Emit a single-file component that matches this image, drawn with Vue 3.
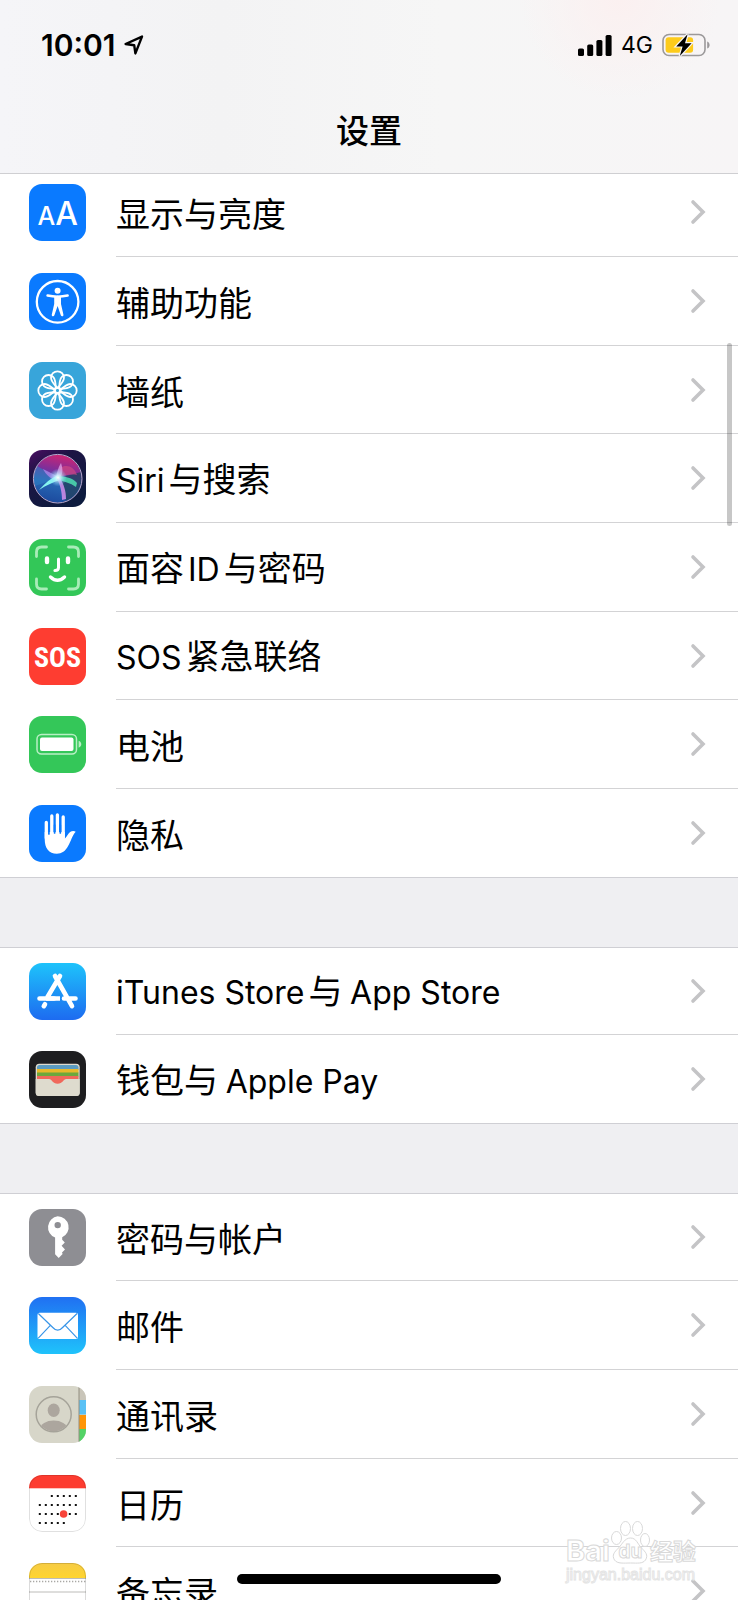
<script setup>
const groups = [
  [
    { icon: 'display', text: '显示与亮度' },
    { icon: 'access', text: '辅助功能' },
    { icon: 'wallpaper', text: '墙纸' },
    { icon: 'siri', text: 'Siri与搜索' },
    { icon: 'face', text: '面容ID与密码' },
    { icon: 'sos', text: 'SOS紧急联络' },
    { icon: 'battery', text: '电池' },
    { icon: 'privacy', text: '隐私' },
  ],
  [
    { icon: 'store', text: 'iTunes Store与 App Store' },
    { icon: 'wallet', text: '钱包与 Apple Pay' },
  ],
  [
    { icon: 'key', text: '密码与帐户' },
    { icon: 'mail', text: '邮件' },
    { icon: 'contacts', text: '通讯录' },
    { icon: 'calendar', text: '日历' },
    { icon: 'notes', text: '备忘录' },
  ],
]

// Latin runs are set in their own face; one that touches Chinese text gets a small lead-in.
const runs = (text) => {
  const parts = text.split(/([A-Za-z][A-Za-z ]*)/).filter(Boolean)
  return parts.map((t, i) => {
    const latin = /^[A-Za-z]/.test(t)
    return { t, latin, lead: latin && i > 0 && !parts[i - 1].endsWith(' ') }
  })
}

const angles = [0, 45, 90, 135, 180, 225, 270, 315]

const dots = []
const weeks = [[2, 6], [0, 6], [0, 6], [0, 4]]
weeks.forEach(([from, to], row) => {
  for (let c = from; c <= to; c++) dots.push({ x: 9.8 + c * 6, y: 20 + row * 9 })
})
</script>

<template>
  <div class="screen">
    <header class="top">
      <div class="status">
        <div class="clock">
          <span>10:01</span>
          <svg width="20" height="20" viewBox="0 0 20 20" aria-hidden="true">
            <path d="M1.6 9 18 1.6 11.4 18.4 10.2 10.2Z" fill="none" stroke="#000" stroke-width="2.4" stroke-linejoin="round" />
          </svg>
        </div>
        <div class="signals">
          <svg width="34" height="21" viewBox="0 0 34 21" aria-hidden="true">
            <rect x="0" y="13.5" width="6" height="7.5" rx="1.6" />
            <rect x="9.2" y="9.5" width="6" height="11.5" rx="1.6" />
            <rect x="18.4" y="5" width="6" height="16" rx="1.6" />
            <rect x="27.6" y="0" width="6" height="21" rx="1.6" />
          </svg>
          <span class="net">4G</span>
          <svg width="48" height="24" viewBox="0 0 48 24" aria-hidden="true">
            <rect x="1" y="1.5" width="42" height="21" rx="6" fill="none" stroke="#9b999a" stroke-width="1.6" />
            <rect x="3.6" y="4.2" width="27.5" height="15.6" rx="3" fill="#fdcb1b" />
            <path d="M45.2 8.5c3.2 1 3.2 6 0 7z" fill="#9b999a" />
            <path d="M25.6 1.2 14.2 13.4h6.4L17.8 23 29.6 10.3h-6.6z" fill="#000" stroke="#f8f5f5" stroke-width="2.4" paint-order="stroke" />
          </svg>
        </div>
      </div>
      <h1 class="title">设置</h1>
    </header>

    <main class="list">
      <ul v-for="(group, g) in groups" :key="g" class="group">
        <li v-for="item in group" :key="item.icon" class="item">
          <a class="row" href="#">
            <svg class="icon" viewBox="0 0 57 57" aria-hidden="true">
              <defs>
                <clipPath :id="'clip-' + item.icon"><rect width="57" height="57" rx="13" /></clipPath>
              </defs>
              <g :clip-path="`url(#clip-${item.icon})`">
                <template v-if="item.icon === 'display'">
                  <rect width="57" height="57" fill="#0a7aff" />
                  <text class="glyph" x="17.4" y="40.5" font-size="25">A</text>
                  <text class="glyph" x="37.6" y="40.5" font-size="32">A</text>
                </template>

                <template v-else-if="item.icon === 'access'">
                  <rect width="57" height="57" fill="#0a7aff" />
                  <circle cx="28.6" cy="28.8" r="20.8" fill="none" stroke="#fff" stroke-width="2.3" />
                  <circle cx="28.6" cy="17.7" r="3" fill="#fff" />
                  <path d="M18.6 22.6c6 1.3 14 1.3 20 0M28.6 23.5v8" fill="none" stroke="#fff" stroke-width="2.6" stroke-linecap="round" />
                  <path d="M25.2 23h6.8v8l2.4 10.5c.4 2-2 2.6-2.6.8L28.6 33l-3.2 9.3c-.6 1.8-3 1.2-2.6-.8L25.2 31z" fill="#fff" />
                </template>

                <template v-else-if="item.icon === 'wallpaper'">
                  <rect width="57" height="57" fill="#38a5da" />
                  <g fill="none" stroke="#fff" stroke-width="1.8" stroke-linejoin="round">
                    <path v-for="a in angles" :key="a" d="M28.5 26C25 22.500 22 19 22 15.800a6.500 6.500 0 0 1 13 0C35 19 32 22.500 28.500 26z" :transform="`rotate(${a} 28.5 28.5)`" />
                    <circle cx="28.5" cy="28.5" r="2.7" />
                  </g>
                </template>

                <template v-else-if="item.icon === 'siri'">
                  <defs>
                    <linearGradient id="siri-bg" x1="0" y1="0" x2=".6" y2="1">
                      <stop offset="0" stop-color="#4b0d63" /><stop offset=".35" stop-color="#1d1444" /><stop offset="1" stop-color="#0d1b3e" />
                    </linearGradient>
                    <linearGradient id="siri-orb" x1=".6" y1="0" x2=".4" y2="1">
                      <stop offset="0" stop-color="#cf2472" /><stop offset=".35" stop-color="#7a2f9c" /><stop offset=".6" stop-color="#2767b4" /><stop offset="1" stop-color="#1c4a9e" />
                    </linearGradient>
                    <radialGradient id="siri-glow">
                      <stop offset="0" stop-color="#fff" /><stop offset=".35" stop-color="#c9f3ff" stop-opacity=".75" /><stop offset="1" stop-color="#7fd0ff" stop-opacity="0" />
                    </radialGradient>
                  </defs>
                  <rect width="57" height="57" fill="url(#siri-bg)" />
                  <circle cx="28.7" cy="28.7" r="24" fill="url(#siri-orb)" />
                  <path d="M29 28 52 22a25 25 0 0 1-15 29z" fill="#22405f" opacity=".8" />
                  <path d="M29 28 8 16a25 25 0 0 0-2 20z" fill="#2f7fc4" opacity=".6" />
                  <path d="M31 18c6-4 14-2 17 7-6-1-12 0-18 2z" fill="#d64a80" opacity=".65" />
                  <path d="M27 28c1-6 2-10 5-15 2 6 2 10-1 15z" fill="#e3a4e8" opacity=".75" />
                  <path d="M28 26 14 19c3 6 7 9 12 11z" fill="#a67fe4" opacity=".85" />
                  <path d="M29 25c-7 3-13 8-19 15 8-5 14-8 21-10z" fill="#86f4ef" />
                  <path d="M28 26c8 0 16 2 20 7l-1 4c-6-4-12-6-19-7z" fill="#4bd6ae" opacity=".9" />
                  <path d="M28 28c3 7 5 13 5 22l4-1c0-8-2-14-6-21z" fill="#c98be8" opacity=".9" />
                  <circle cx="29" cy="27.5" r="9" fill="url(#siri-glow)" />
                  <circle cx="28.7" cy="28.7" r="24.3" fill="none" stroke="#b8a9cf" stroke-width="1" />
                </template>

                <template v-else-if="item.icon === 'face'">
                  <rect width="57" height="57" fill="#33c758" />
                  <g fill="none" stroke-linecap="round" stroke-linejoin="round" stroke="#fff">
                    <path d="M7.5 17.5V13q0-5 5-5h5M39.5 8h5q5 0 5 5v4.5M49.5 40v5q0 5-5 5h-5M17.5 50h-5q-5 0-5-5v-5" stroke="#a9ecb8" stroke-width="2.8" />
                    <path d="M18 19.5v3.6M39 19.5v3.6" stroke-width="4.4" />
                    <path d="M29.5 20v8.5q0 3-3.6 3" stroke-width="3" />
                    <path d="M21.5 38q7 6.6 14 0" stroke-width="3.4" />
                  </g>
                </template>

                <template v-else-if="item.icon === 'sos'">
                  <rect width="57" height="57" fill="#fe3d31" />
                  <text class="sos" x="28.5" y="39">SOS</text>
                </template>

                <template v-else-if="item.icon === 'battery'">
                  <rect width="57" height="57" fill="#34c759" />
                  <rect x="8" y="18.5" width="39.5" height="19.5" rx="4.5" fill="none" stroke="#b9efc5" stroke-width="1.5" />
                  <rect x="11" y="21.5" width="33.5" height="13.5" rx="2" fill="#fff" />
                  <path d="M49.6 24.8c3.6 1.2 3.6 5.7 0 6.9z" fill="#b9efc5" />
                </template>

                <template v-else-if="item.icon === 'privacy'">
                  <rect width="57" height="57" fill="#0a7aff" />
                  <path d="M17.3 17.5V33M22.8 11v20M28.4 10v20M34.2 12v20" stroke="#fff" stroke-width="3.3" stroke-linecap="round" />
                  <path d="M15.7 27h20.2v6.5c2-1.5 3-5 5.2-6.5 1.6-1.2 4-1.6 5.6-.3-3.7 4-4.6 9.3-7.6 14.3-2.6 5-6.3 7.7-11.3 7.7-8 0-12.1-5.5-12.1-14.7z" fill="#fff" />
                  <path d="M19.9 20v9M25.6 20v8M31.3 20v8" stroke="#0a7aff" stroke-width="1.7" stroke-linecap="round" />
                </template>

                <template v-else-if="item.icon === 'store'">
                  <defs><linearGradient id="store-bg" x2="0" y2="1"><stop offset="0" stop-color="#1ec3fb" /><stop offset="1" stop-color="#1d6bf0" /></linearGradient></defs>
                  <rect width="57" height="57" fill="url(#store-bg)" />
                  <path d="M31 13 18.5 34M26 13 43 43.2M10.5 35.5H25M35 35.5h11.5M16 41.2l-1.2 2" fill="none" stroke="#fff" stroke-width="4.6" stroke-linecap="round" />
                  <path d="M17 35.5h14" stroke="#fff" stroke-width="4.6" />
                </template>

                <template v-else-if="item.icon === 'wallet'">
                  <defs><clipPath id="wallet-card"><rect x="8" y="14" width="41.5" height="30" rx="2.5" /></clipPath></defs>
                  <rect width="57" height="57" fill="#1e1e20" />
                  <rect x="6.7" y="12.7" width="44" height="32.3" rx="3.5" fill="#dedbce" />
                  <g clip-path="url(#wallet-card)">
                    <rect x="8" y="14" width="42" height="5" fill="#5c9cc0" />
                    <rect x="8" y="18" width="42" height="4" fill="#e8b92b" />
                    <rect x="8" y="21.5" width="42" height="4" fill="#6ca83c" />
                    <rect x="8" y="25" width="42" height="10" fill="#f0685b" />
                  </g>
                  <path d="M6.7 28H20c3 0 3.5 4.8 8.6 4.8S34.3 28 37.3 28h13.4v13.5a3.5 3.5 0 0 1-3.5 3.5h-37a3.5 3.5 0 0 1-3.5-3.5z" fill="#dedbce" />
                </template>

                <template v-else-if="item.icon === 'key'">
                  <rect width="57" height="57" fill="#8e8e93" />
                  <path fill-rule="evenodd" d="M28.7 7.3a11 11 0 0 1 4.5 21v2.4l2.6 2.8-3.2 3.3 3.4 3.6-3 3.2.6 1.5-3.9 4-3.6-3.9V28.5a11 11 0 0 1 2.6-21.2zm0 5.6a3.2 3.2 0 1 0 0 6.4 3.2 3.2 0 0 0 0-6.4z" fill="#fff" />
                </template>

                <template v-else-if="item.icon === 'mail'">
                  <defs><linearGradient id="mail-bg" x2="0" y2="1"><stop offset="0" stop-color="#2070f2" /><stop offset="1" stop-color="#1fc3fb" /></linearGradient></defs>
                  <rect width="57" height="57" fill="url(#mail-bg)" />
                  <rect x="8.5" y="15.7" width="40.5" height="26.3" rx="2" fill="#fff" />
                  <path d="m9.3 16.5 14.5 14q4.9 5.4 9.8 0l14.5-14M9.3 41.2l11.8-12.6M48.2 41.2 36.4 28.6" fill="none" stroke="#3a96e8" stroke-width="1.2" />
                </template>

                <template v-else-if="item.icon === 'contacts'">
                  <defs><clipPath id="person"><circle cx="24.7" cy="28.3" r="17" /></clipPath></defs>
                  <rect width="57" height="57" fill="#d7d6c9" />
                  <rect x="50" width="7" height="14" fill="#c9c5b9" />
                  <rect x="50" y="14" width="7" height="14.5" fill="#5ac1f5" />
                  <rect x="50" y="29" width="7" height="14" fill="#ff9508" />
                  <rect x="50" y="43" width="7" height="14" fill="#53d366" />
                  <path d="M50 0v57" stroke="#928f80" stroke-width="1" />
                  <circle cx="24.7" cy="28.3" r="17.5" fill="none" stroke="#a5a399" stroke-width="1.5" />
                  <ellipse cx="24.7" cy="24.3" rx="6" ry="6.8" fill="#aca69e" />
                  <ellipse cx="24.7" cy="43" rx="13.5" ry="8.5" fill="#aca69e" clip-path="url(#person)" />
                </template>

                <template v-else-if="item.icon === 'calendar'">
                  <rect width="57" height="57" fill="#fff" />
                  <rect width="57" height="13.3" fill="#fd3c30" />
                  <rect v-for="(d, i) in dots" :key="i" :x="d.x" :y="d.y" width="2" height="2" fill="#111" />
                  <circle cx="34.6" cy="39" r="3.8" fill="#f8443a" />
                  <rect x=".5" y=".5" width="56" height="56" rx="12.5" fill="none" stroke="#000" stroke-opacity=".12" />
                </template>

                <template v-else>
                  <defs><linearGradient id="notes-bg" x2="0" y2="1"><stop offset="0" stop-color="#f6cb45" /><stop offset="1" stop-color="#ffd52f" /></linearGradient></defs>
                  <rect width="57" height="57" fill="#fff" />
                  <rect width="57" height="15" fill="url(#notes-bg)" />
                  <path d="M0 15.5h57M0 29h57M0 43h57" stroke="#bdbcb9" stroke-width="1" />
                  <path d="M1 18.5h56" stroke="#a9a8a5" stroke-width="1.3" stroke-dasharray="1.3 1.7" />
                  <rect x=".5" y=".5" width="56" height="56" rx="12.5" fill="none" stroke="#000" stroke-opacity=".14" />
                </template>
              </g>
            </svg>
            <span class="body">
              <span class="label"><span v-for="(r, i) in runs(item.text)" :key="i" :class="{ latin: r.latin, lead: r.lead }">{{ r.t }}</span></span>
              <svg class="chevron" viewBox="0 0 16 26" aria-hidden="true">
                <path d="m3 3 10 10L3 23" fill="none" stroke="#c4c4c6" stroke-width="3.6" stroke-linecap="round" stroke-linejoin="miter" />
              </svg>
            </span>
          </a>
        </li>
      </ul>
    </main>

    <div class="scrollbar"></div>
    <div class="home"></div>
    <div class="watermark">
      <div class="brand">
        <span class="outline">Bai</span>
        <svg width="40" height="44" viewBox="0 0 40 44" aria-hidden="true">
          <g fill="#fff" stroke="#d9d9d9" stroke-width="1">
            <ellipse cx="6.5" cy="18" rx="5" ry="6.5" />
            <ellipse cx="15.5" cy="8.5" rx="5" ry="7" />
            <ellipse cx="27.5" cy="8.5" rx="5" ry="7" />
            <ellipse cx="35" cy="20" rx="4.5" ry="6.5" />
            <path d="M20.5 18c-6 0-8 6-12 10s-7 7-4 12c3 4 9 3 16 3s12 1 15-3c3-5 0-8-4-12s-5-10-11-10z" />
          </g>
          <text class="du" x="20.5" y="38">du</text>
        </svg>
        <span class="outline cn">经验</span>
      </div>
      <div class="url">jingyan.baidu.com</div>
    </div>
  </div>
</template>

<style>
body {
  background: #fff;
}
</style>

<style scoped>
.screen {
  position: relative;
  display: flex;
  flex-direction: column;
  height: 100vh;
  overflow: hidden;
  background: #fff;
  color: #000;
  font-family: "Noto Sans CJK SC", sans-serif;
}
.top {
  position: relative;
  z-index: 1;
  flex: none;
  background:
    radial-gradient(circle at 84% 0, #fbf0f0 0, rgba(251, 240, 240, 0) 100px),
    linear-gradient(90deg, #f5f5f8, #f3f3f4 30%, #f6f6f6 60%, #f7f5f6);
  border-bottom: 1px solid #cfcfd2;
}
.status {
  display: flex;
  align-items: center;
  justify-content: space-between;
  height: 90px;
  padding: 0 28px 0 41px;
  font-family: Inter, sans-serif;
}
.clock {
  display: flex;
  align-items: center;
  gap: 8px;
  font-size: 30px;
  font-weight: 600;
}
.signals {
  display: flex;
  align-items: center;
  gap: 9px;
}
.net {
  font-size: 23px;
  font-weight: 400;
}
.title {
  margin: 0;
  height: 83px;
  line-height: 78px;
  text-align: center;
  font-size: 33px;
  font-weight: 500;
}
.list {
  flex: 1;
  min-height: 0;
  margin-top: -6px;
  overflow: hidden;
}
.group {
  margin: 0;
  padding: 0;
  list-style: none;
}
.group + .group {
  border-top: 69px solid #efeff2;
  box-shadow: inset 0 1px #cfcfd4;
}
.item {
  height: 89px;
}
.item:nth-child(3n),
.group + .group .item:first-child {
  height: 88px;
}
.group + .group .item:nth-child(3) {
  height: 89px;
}
.group + .group .item:nth-child(4) {
  height: 88px;
}
.row {
  display: flex;
  align-items: center;
  gap: 30px;
  height: 100%;
  padding-left: 29px;
  color: inherit;
  text-decoration: none;
}
.icon {
  flex: none;
  width: 57px;
  height: 57px;
}
.body {
  display: flex;
  flex: 1;
  align-items: center;
  justify-content: space-between;
  align-self: stretch;
  padding-right: 32px;
  border-bottom: 1px solid #d3d3d5;
}
.item:last-child .row {
  box-shadow: inset 0 -1px #cfcfd4;
}
.item:last-child .body {
  border-bottom-color: transparent;
}
.label {
  padding-top: 2px;
  font-size: 34px;
  line-height: 48px;
  white-space: pre;
}
.latin {
  margin-right: 4px;
  font-family: Inter, sans-serif;
  font-size: 32px;
}
.lead {
  margin-left: 4px;
}
.chevron {
  width: 16px;
  height: 26px;
}
.glyph {
  fill: #fff;
  font-family: Inter, sans-serif;
  font-weight: 500;
  text-anchor: middle;
}
.sos {
  fill: #fff;
  font-family: "Roboto Condensed", "Liberation Sans Narrow", Roboto, sans-serif;
  font-size: 28px;
  font-weight: 700;
  text-anchor: middle;
}
.scrollbar {
  position: absolute;
  z-index: 2;
  top: 343px;
  right: 6px;
  width: 5px;
  height: 183px;
  border-radius: 3px;
  background: rgba(0, 0, 0, 0.22);
}
.home {
  position: absolute;
  z-index: 2;
  bottom: 16px;
  left: 50%;
  width: 264px;
  height: 10px;
  margin-left: -132px;
  border-radius: 5px;
  background: #000;
}
.watermark {
  position: absolute;
  z-index: 2;
  right: 40px;
  bottom: 14px;
  width: 132px;
}
.brand {
  display: flex;
  align-items: flex-end;
}
.outline {
  color: #fff;
  font-family: Inter, sans-serif;
  font-size: 29px;
  font-weight: 700;
  line-height: 27px;
  -webkit-text-stroke: 1px #d9d9d9;
}
.cn {
  font-family: "Noto Sans CJK SC", sans-serif;
  font-size: 23px;
}
.du {
  fill: #fff;
  stroke: #d9d9d9;
  font-family: Inter, sans-serif;
  font-size: 19px;
  font-weight: 700;
  text-anchor: middle;
}
.url {
  color: #fff;
  font-family: "Liberation Sans", sans-serif;
  font-size: 16px;
  line-height: 22px;
  -webkit-text-stroke: 1px #e4e4e4;
}
</style>
